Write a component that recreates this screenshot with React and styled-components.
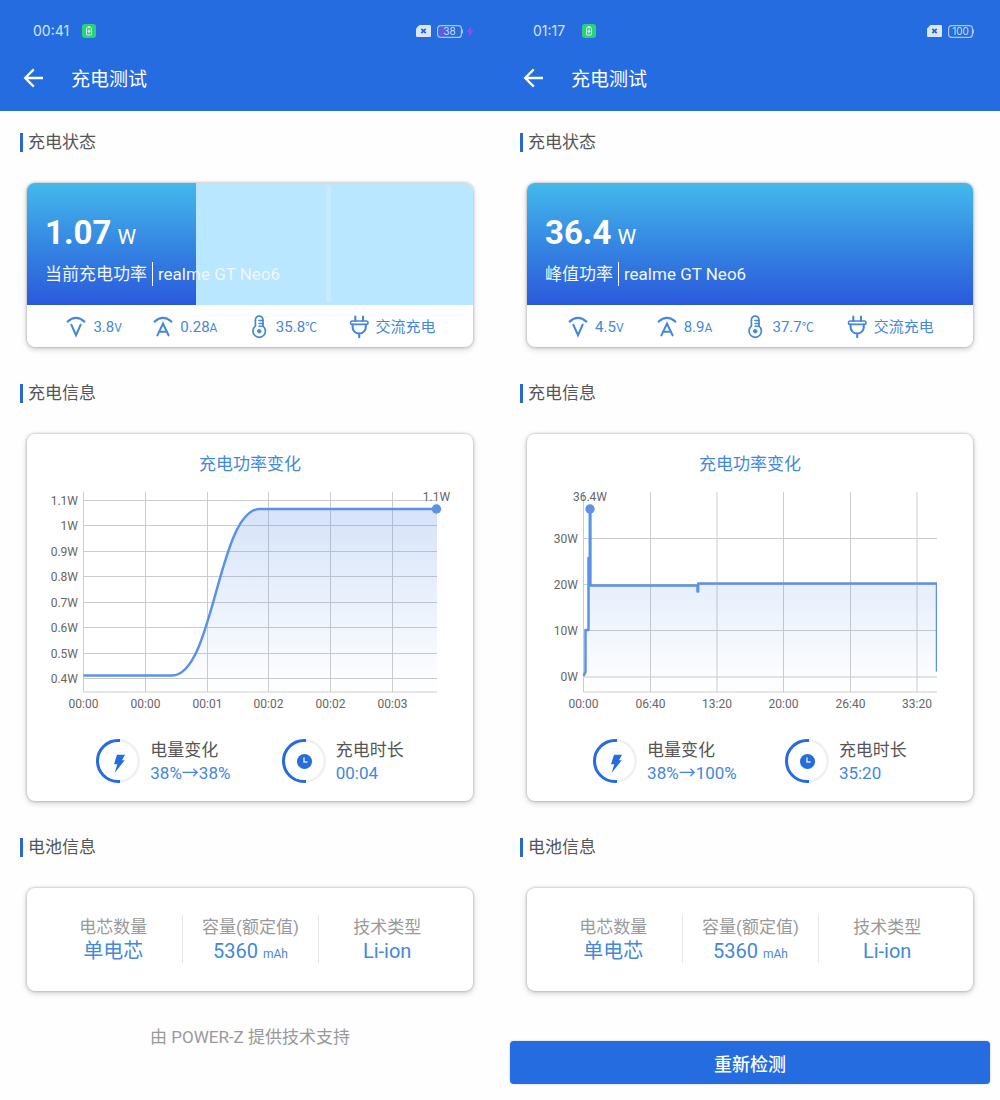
import React from 'react'
import styled, { createGlobalStyle } from 'styled-components'

const GlobalStyle = createGlobalStyle`
  * {
    box-sizing: border-box;
  }

  body {
    margin: 0;
    background: #fefefe;
    color: #555;
    font-family: Roboto, 'Noto Sans CJK SC', sans-serif;
    font-size: 17px;
    line-height: 24px;
  }

  h1, h2, h3, p, dl, dd {
    margin: 0;
    font-weight: 400;
  }

  svg {
    display: block;
    flex: none;
  }
`

const Screens = styled.div`
  display: grid;
  grid-template-columns: repeat(2, minmax(0, 1fr));
  min-height: 100vh;
`

const Screen = styled.section`
  display: flex;
  flex-direction: column;
`

const Header = styled.header`
  padding-top: 17px;
  background: #246ce0;
  color: #fff;
`

const StatusBar = styled.div`
  display: flex;
  align-items: center;
  height: 28px;
  padding: 0 26px 0 33px;
  font-family: Inter, sans-serif;
  font-size: 14px;
  color: #d5e2fa;
`

const Time = styled.span`
  width: 49px;
`

const StatusIcons = styled.div`
  display: flex;
  align-items: center;
  gap: 6px;
  margin-left: auto;
`

const BatteryBadge = styled.span`
  display: flex;
  align-items: center;
  gap: 3px;
`

const AppBar = styled.div`
  display: flex;
  align-items: center;
  gap: 26px;
  height: 66px;
  padding: 0 21px;
`

const BackButton = styled.button`
  padding: 0;
  border: 0;
  background: none;
  color: inherit;
  cursor: pointer;
`

const AppTitle = styled.h1`
  padding-top: 3px;
  font-size: 19px;
`

const Main = styled.main`
  padding: 19px 27px 0;
`

const SectionTitle = styled.h2`
  display: flex;
  align-items: center;
  gap: 5px;
  margin: 0 -7px 29px;
  font-size: 17px;

  &::before {
    content: '';
    width: 3px;
    height: 19px;
    background: #2a69cc;
  }
`

const Card = styled.div`
  margin-bottom: 34px;
  border-radius: 8px;
  background: #fff;
  box-shadow: 0 0 2px 1px rgba(0, 0, 0, 0.14), 0 2px 6px rgba(0, 0, 0, 0.2);
  overflow: hidden;
`

const Banner = styled.div`
  position: relative;
  height: 122px;
  padding: 28px 18px 0;
  background: #b8e7ff;
  color: #fff;
`

const BannerFill = styled.div`
  position: absolute;
  inset: 0 auto 0 0;
  background: linear-gradient(#44b9ec, #3587e2 50%, #2b59dc);
`

const Sheen = styled.div`
  position: absolute;
  top: 2px;
  bottom: 3px;
  left: 67%;
  width: 5px;
  background: rgba(255, 255, 255, 0.2);
`

const Power = styled.p`
  position: relative;
  display: flex;
  align-items: baseline;
  gap: 6px;
  font-size: 21px;
  line-height: 44px;

  strong {
    font-size: 33px;
    font-weight: 700;
  }
`

const Device = styled.p`
  position: relative;
  display: flex;
  align-items: center;
  margin-top: 3px;
  color: #f0f6ff;

  span + span {
    margin-left: 5px;
    padding-left: 5px;
    border-left: 1px solid #fff;
  }
`

const Readings = styled.div`
  display: flex;
  justify-content: space-evenly;
  align-items: center;
  height: 42px;
  padding: 2px 8px 0;
  color: #4488d8;
  font-size: 15px;
`

const Reading = styled.span`
  display: flex;
  align-items: center;
  gap: 5px;
`

const Unit = styled.small`
  font-size: 12px;
`

const ChartCard = styled(Card)`
  padding: 18px 0 16px;
`

const ChartTitle = styled.h3`
  margin-bottom: 8px;
  color: #4488d8;
  font-size: 17px;
  text-align: center;
`

const ChartSvg = styled.svg`
  width: 100%;
  height: auto;
  font-size: 12px;
  fill: #666;
`

const Summary = styled.div`
  display: flex;
  justify-content: space-evenly;
  margin-top: 24px;
  padding: 0 18px;
`

const SummaryItem = styled.div`
  display: flex;
  align-items: center;
  gap: 10px;
  line-height: 23px;
`

const SummaryText = styled.div`
  padding-top: 3px;
`

const Value = styled.p`
  color: #4488d8;
`

const Specs = styled.dl`
  display: grid;
  grid-template-columns: repeat(3, 1fr);
  padding: 27px 18px 28px;
  text-align: center;
`

const Spec = styled.div`
  color: #999;

  & + & {
    border-left: 1px solid #e6e6e6;
  }

  dd {
    height: 24px;
    color: #4488d8;
    font-size: 20px;
  }
`

const Credit = styled.p`
  color: #999;
  text-align: center;
`

const RetryButton = styled.button`
  height: 43px;
  margin: 16px 10px;
  border: 0;
  border-radius: 4px;
  background: #246ce0;
  color: #fff;
  font: 500 18px Roboto, 'Noto Sans CJK SC', sans-serif;
  box-shadow: 0 0 2px rgba(0, 0, 0, 0.3);
  cursor: pointer;
`

const ChargeAppIcon = () => (
  <svg width="14" height="14" viewBox="0 0 14 14" aria-hidden="true">
    <rect width="14" height="14" rx="3" fill="#2ed07c" />
    <path d="M6 3.2V2.6h2v.6" fill="none" stroke="#e4fff0" />
    <rect x="4.5" y="3.6" width="5" height="7.4" rx="1" fill="none" stroke="#e4fff0" strokeWidth="0.9" />
    <path d="M7 5.3v3.8M5.5 7.2h3" stroke="#e4fff0" strokeWidth="1" />
  </svg>
)

const SimIcon = () => (
  <svg width="15" height="12" viewBox="0 0 15 12" aria-hidden="true">
    <path d="M3.5 0h10.2A1.3 1.3 0 0 1 15 1.3v9.4a1.3 1.3 0 0 1-1.3 1.3H1.3A1.3 1.3 0 0 1 0 10.7V3.5z" fill="#dbe6fb" />
    <path d="M5.3 3.8l4.4 4.4M9.7 3.8L5.3 8.2" stroke="#2a62c8" strokeWidth="1.7" />
  </svg>
)

const BatteryIcon = ({ level, charging }) => (
  <BatteryBadge>
    <svg width="26" height="13" viewBox="0 0 26 13" role="img" aria-label={`${level}%`}>
      {charging && <path d="M3 1.5h6v10H3A1.5 1.5 0 0 1 1.5 10V3A1.5 1.5 0 0 1 3 1.5z" fill="#5a5ce8" />}
      <rect x="0.6" y="0.6" width="23.8" height="11.8" rx="3" fill="none" stroke="#a9c6f5" strokeWidth="1.2" />
      <path d="M25.5 4.5v4" stroke="#a9c6f5" />
      <text x="12.5" y="10" textAnchor="middle" fontSize="10" fill="#cfdffa">{level}</text>
    </svg>
    {charging && (
      <svg width="8" height="13" viewBox="0 0 8 13" aria-hidden="true">
        <path d="M5.4 0.5L0.3 7.3h3l-.9 5.2L7.8 5.7H4.8z" fill="#8b50ea" />
      </svg>
    )}
  </BatteryBadge>
)

const BackIcon = () => (
  <svg width="24" height="24" viewBox="0 0 24 24" fill="none" stroke="currentColor" strokeWidth="2.3" aria-hidden="true">
    <path d="M12.8 3.4L4.2 12l8.6 8.6M4.2 12H22" />
  </svg>
)

const readingIcons = {
  volt: (
    <>
      <path d="M3.6 6.6Q12-.8 20.4 6.6" />
      <path d="M7.4 9.8L12 20.2l4.600-10.400" />
    </>
  ),
  amp: (
    <>
      <path d="M3.6 6.6Q12-.8 20.4 6.6" />
      <path d="M6.400 20.400L12 8.600l5.600 11.800M8.400 16.800h7.200" />
    </>
  ),
  temp: (
    <>
      <path d="M8.4 11.2V4.900a3.800 3.800 0 0 1 7.600 0v6.300a6.200 6.200 0 1 1-7.600 0z" strokeWidth="1.7" />
      <path d="M12 5.400h4M12 8.400h4M12 11.300h4" strokeWidth="1.5" />
      <circle cx="12.2" cy="16.200" r="1.700" fill="currentColor" strokeWidth="1" />
    </>
  ),
  plug: (
    <>
      <path d="M8.300 1.500v4.500M16 1.500v4.500M12.200 18.600v3.600" />
      <rect x="3.500" y="6" width="17.500" height="3.400" rx="1.700" strokeWidth="1.600" />
      <path d="M5.600 9.600v2.300c0 3.800 2.800 6.600 6.600 6.600s6.600-2.800 6.600-6.600V9.600" />
    </>
  )
}

const ReadingIcon = ({ name }) => (
  <svg width="24" height="24" viewBox="0 0 24 24" fill="none" stroke="currentColor" strokeWidth="2.1" strokeLinecap="round" aria-hidden="true">
    {readingIcons[name]}
  </svg>
)

const Ring = ({ children }) => (
  <svg width="44" height="44" viewBox="0 0 44 44" aria-hidden="true">
    <circle cx="22" cy="22" r="20.7" fill="none" stroke="#eff1f1" strokeWidth="2.5" />
    <path d="M24 1.5h-2a20.5 20.5 0 0 0 0 41h2" fill="none" stroke="#246ce0" strokeWidth="3" />
    {children}
  </svg>
)

// plot area inside the 446x228 view box
const LEFT = 56.5
const RIGHT = 410
const TOP = 8
const BOTTOM = 208

const PowerChart = ({ id, chart }) => (
  <ChartSvg viewBox="0 0 446 228" role="img" aria-label="充电功率变化">
    <defs>
      <linearGradient id={id} gradientUnits="userSpaceOnUse" x1="0" y1="25" x2="0" y2={BOTTOM}>
        <stop offset="0" stopColor="#4a86e4" stopOpacity="0.23" />
        <stop offset="1" stopColor="#4a86e4" stopOpacity="0" />
      </linearGradient>
      <clipPath id={`${id}-plot`}>
        <rect x={LEFT - 1} y={TOP} width={RIGHT - LEFT + 1} height={BOTTOM - TOP} />
      </clipPath>
    </defs>
    {chart.yTicks.map(([label, y]) => (
      <g key={label}>
        <path d={`M${LEFT} ${y}H${RIGHT}`} stroke="#ccc" />
        <text x="51" y={y + 4} textAnchor="end">{label}</text>
      </g>
    ))}
    {chart.xTicks.map(([label, x], i) => (
      <g key={i}>
        <path d={`M${x} ${TOP}V${BOTTOM}`} stroke="#ccc" />
        <text x={x} y="224" textAnchor="middle">{label}</text>
      </g>
    ))}
    <path d={`M${LEFT} ${BOTTOM}H${RIGHT}`} stroke="#ccc" />
    <g clipPath={`url(#${id}-plot)`}>
      <path d={`${chart.line}V${BOTTOM}H${LEFT}z`} fill={`url(#${id})`} />
      <path d={chart.line} fill="none" stroke="#5b92e5" strokeWidth="2.5" strokeLinejoin="round" />
    </g>
    <circle cx={chart.peak.x} cy="25" r="4.7" fill="#5b92e5" />
    <text x={chart.peak.x} y="17" textAnchor="middle">{chart.peak.label}</text>
  </ChartSvg>
)

const screens = [
  {
    time: '00:41',
    level: 38,
    charging: true,
    power: '1.07',
    powerLabel: '当前充电功率',
    volt: '3.8',
    amp: '0.28',
    temp: '35.8',
    change: '38%→38%',
    duration: '00:04',
    chart: {
      yTicks: [
        ['1.1W', 16.5], ['1W', 41.5], ['0.9W', 67.5], ['0.8W', 92.5],
        ['0.7W', 118.5], ['0.6W', 143.5], ['0.5W', 169.5], ['0.4W', 194.5]
      ],
      xTicks: [
        ['00:00', 56.5], ['00:00', 118.5], ['00:01', 180.5],
        ['00:02', 241.5], ['00:02', 303.5], ['00:03', 365.5]
      ],
      line: 'M56.5 191.5H145C187 191.5 191 25 233 25H410',
      peak: { x: 409.5, label: '1.1W' }
    }
  },
  {
    time: '01:17',
    level: 100,
    charging: false,
    power: '36.4',
    powerLabel: '峰值功率',
    volt: '4.5',
    amp: '8.9',
    temp: '37.7',
    change: '38%→100%',
    duration: '35:20',
    chart: {
      yTicks: [['30W', 54.5], ['20W', 100.5], ['10W', 146.5], ['0W', 193]],
      xTicks: [
        ['00:00', 56.5], ['06:40', 123.5], ['13:20', 190],
        ['20:00', 256.5], ['26:40', 323.5], ['33:20', 390]
      ],
      line: 'M56.5 192L58.5 188V146H61.5V74H62.8V25H63.4V101.5H170.5V107.5H171.2V99.5H410V187.5',
      peak: { x: 63, label: '36.4W' }
    }
  }
]

const PhoneScreen = ({ data, footer }) => {
  return (
    <Screen>
      <Header>
        <StatusBar>
          <Time>{data.time}</Time>
          <ChargeAppIcon />
          <StatusIcons>
            <SimIcon />
            <BatteryIcon level={data.level} charging={data.charging} />
          </StatusIcons>
        </StatusBar>
        <AppBar>
          <BackButton type="button" aria-label="返回">
            <BackIcon />
          </BackButton>
          <AppTitle>充电测试</AppTitle>
        </AppBar>
      </Header>
      <Main>
        <SectionTitle>充电状态</SectionTitle>
        <Card>
          <Banner>
            <BannerFill style={{ width: `${data.level}%` }} />
            {data.charging && <Sheen />}
            <Power>
              <strong>{data.power}</strong>W
            </Power>
            <Device>
              <span>{data.powerLabel}</span>
              <span>realme GT Neo6</span>
            </Device>
          </Banner>
          <Readings>
            <Reading>
              <ReadingIcon name="volt" />
              <span>{data.volt}<Unit>V</Unit></span>
            </Reading>
            <Reading>
              <ReadingIcon name="amp" />
              <span>{data.amp}<Unit>A</Unit></span>
            </Reading>
            <Reading>
              <ReadingIcon name="temp" />
              <span>{data.temp}<Unit>℃</Unit></span>
            </Reading>
            <Reading>
              <ReadingIcon name="plug" />
              <span>交流充电</span>
            </Reading>
          </Readings>
        </Card>

        <SectionTitle>充电信息</SectionTitle>
        <ChartCard>
          <ChartTitle>充电功率变化</ChartTitle>
          <PowerChart id={`fill-${data.level}`} chart={data.chart} />
          <Summary>
            <SummaryItem>
              <Ring>
                <path d="M21 15.7h8L26 21.3h2.7L18.6 34l2.7-8.8H18z" fill="#246ce0" />
              </Ring>
              <SummaryText>
                <p>电量变化</p>
                <Value>{data.change}</Value>
              </SummaryText>
            </SummaryItem>
            <SummaryItem>
              <Ring>
                <circle cx="22.5" cy="22.5" r="7.5" fill="#246ce0" />
                <path d="M22 18.5v4.500h3.500" fill="none" stroke="#dce8fc" strokeWidth="1.5" />
              </Ring>
              <SummaryText>
                <p>充电时长</p>
                <Value>{data.duration}</Value>
              </SummaryText>
            </SummaryItem>
          </Summary>
        </ChartCard>

        <SectionTitle>电池信息</SectionTitle>
        <Card>
          <Specs>
            <Spec>
              <dt>电芯数量</dt>
              <dd>单电芯</dd>
            </Spec>
            <Spec>
              <dt>容量(额定值)</dt>
              <dd>5360 <Unit>mAh</Unit></dd>
            </Spec>
            <Spec>
              <dt>技术类型</dt>
              <dd>Li-ion</dd>
            </Spec>
          </Specs>
        </Card>
      </Main>
      {footer}
    </Screen>
  )
}

const App = () => {
  return (
    <>
      <GlobalStyle />
      <Screens>
        <PhoneScreen data={screens[0]} footer={<Credit>由 POWER-Z 提供技术支持</Credit>} />
        <PhoneScreen data={screens[1]} footer={<RetryButton type="button">重新检测</RetryButton>} />
      </Screens>
    </>
  )
}

export default App
